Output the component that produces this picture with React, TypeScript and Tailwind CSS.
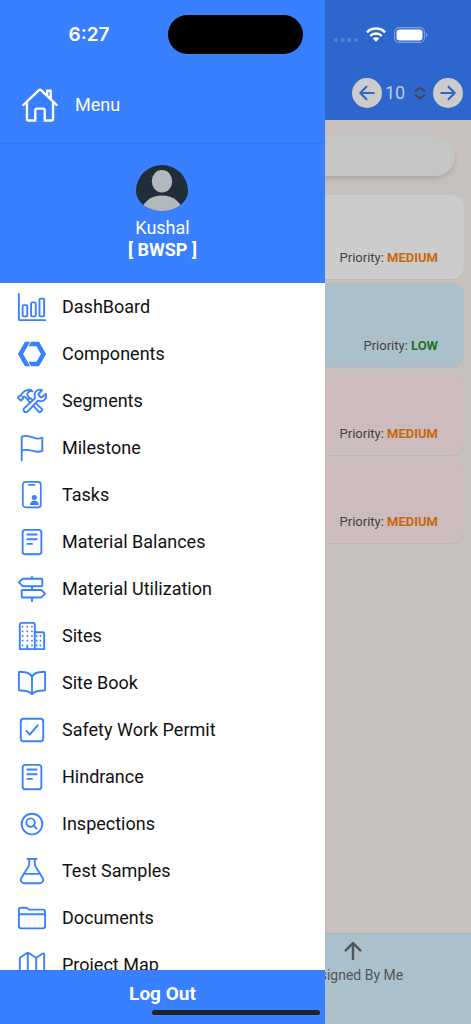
import type { ComponentType } from "react";
import {
  IoArrowBack,
  IoArrowForward,
  IoArrowUp,
  IoBarChartOutline,
  IoBookOutline,
  IoBusinessOutline,
  IoCheckboxOutline,
  IoConstructOutline,
  IoFlagOutline,
  IoFlaskOutline,
  IoFolderOutline,
  IoHomeOutline,
  IoLogoWebComponent,
  IoMapOutline,
  IoReaderOutline,
  IoSearchCircleOutline,
  IoTrailSignOutline,
} from "react-icons/io5";

interface MenuItem {
  label: string;
  icon: ComponentType<{ className?: string }>;
}

interface Task {
  priority: string;
  card: string;
  text: string;
}

function TaskIcon({ className }: { className?: string }) {
  return (
    <svg viewBox="0 0 30 30" fill="none" className={className} aria-hidden="true">
      <rect x="5.8" y="1.8" width="18" height="25.6" rx="3" stroke="currentColor" strokeWidth="1.7" />
      <path d="M11.8 4.9h5.8" stroke="currentColor" strokeWidth="1.6" strokeLinecap="round" />
      <circle cx="17.3" cy="17.6" r="2.5" fill="currentColor" />
      <path d="M13 25c0-3 2-4.2 4.3-4.2s4.5 1.2 4.5 4.2z" fill="currentColor" />
    </svg>
  );
}

const menuItems: MenuItem[] = [
  { label: "DashBoard", icon: IoBarChartOutline },
  { label: "Components", icon: IoLogoWebComponent },
  { label: "Segments", icon: IoConstructOutline },
  { label: "Milestone", icon: IoFlagOutline },
  { label: "Tasks", icon: TaskIcon },
  { label: "Material Balances", icon: IoReaderOutline },
  { label: "Material Utilization", icon: IoTrailSignOutline },
  { label: "Sites", icon: IoBusinessOutline },
  { label: "Site Book", icon: IoBookOutline },
  { label: "Safety Work Permit", icon: IoCheckboxOutline },
  { label: "Hindrance", icon: IoReaderOutline },
  { label: "Inspections", icon: IoSearchCircleOutline },
  { label: "Test Samples", icon: IoFlaskOutline },
  { label: "Documents", icon: IoFolderOutline },
  { label: "Project Map", icon: IoMapOutline },
];

const tasks: Task[] = [
  { priority: "MEDIUM", card: "bg-[#cccccc]", text: "text-[#c8690f]" },
  { priority: "LOW", card: "bg-[#abc0cb]", text: "text-[#207326]" },
  { priority: "MEDIUM", card: "bg-[#ccbcbd]", text: "text-[#c8690f]" },
  { priority: "MEDIUM", card: "bg-[#ccbcbd]", text: "text-[#c8690f]" },
];

function StatusBar() {
  return (
    <div className="pointer-events-none absolute inset-x-0 top-0 z-20 grid h-[69px] grid-cols-[1fr_135px_1fr] items-center text-white">
      <span className="pt-0.5 pl-2.5 text-center font-['Inter'] text-[19px] font-semibold">6:27</span>
      <div className="h-[39px] rounded-full bg-black" />
      <div className="flex items-center justify-center gap-2 pr-3">
        <svg viewBox="0 0 24 14" className="h-3.5 w-6" aria-hidden="true">
          <g fill="#5583d6">
            <circle cx="2" cy="12" r="2" />
            <circle cx="8.6" cy="12" r="2" />
            <circle cx="15.2" cy="12" r="2" />
            <circle cx="21.8" cy="12" r="2" />
          </g>
        </svg>
        <svg viewBox="0 0 20 15" className="h-[15px] w-5" fill="none" stroke="#fff" strokeWidth="2.5" aria-hidden="true">
          <path d="M.9 5.3a13 13 0 0 1 18.2 0" />
          <path d="M4.3 8.9a8.1 8.1 0 0 1 11.4 0" />
          <path d="M10 14.8l-3.2-3.3a4.6 4.6 0 0 1 6.4 0z" fill="#fff" stroke="none" />
        </svg>
        <svg viewBox="0 0 34 16" className="h-4 w-[34px]" aria-hidden="true">
          <rect x=".6" y=".6" width="29.8" height="14.8" rx="4.5" fill="none" stroke="#7fa2e4" strokeWidth="1.1" />
          <rect x="2.5" y="2.5" width="26" height="11" rx="3" fill="#fff" />
          <path d="M32 5.5c1.8.8 1.8 4.2 0 5z" fill="#7fa2e4" />
        </svg>
      </div>
    </div>
  );
}

function TaskPage() {
  return (
    <div className="flex min-h-screen flex-col bg-[#c6c1bf]">
      <header className="flex h-[120px] items-center justify-end bg-[#2d66cc] px-2 pt-[66px]">
        <button type="button" aria-label="Previous page" className="flex size-[30px] items-center justify-center rounded-full bg-[#cccccc] text-[#2d66cc]">
          <IoArrowBack className="size-[22px]" />
        </button>
        <div className="relative flex items-center">
          <select aria-label="Page size" defaultValue="10" className="w-[51px] appearance-none bg-transparent pl-[3px] text-lg text-[#bfcbe0]">
            <option>10</option>
          </select>
          <svg viewBox="0 0 12 14" className="pointer-events-none absolute right-[7px] h-3.5 w-3" fill="none" stroke="#46484c" strokeWidth="2" aria-hidden="true">
            <path d="M1 5.5l5-4 5 4M1 8.5l5 4 5-4" />
          </svg>
        </div>
        <button type="button" aria-label="Next page" className="flex size-[30px] items-center justify-center rounded-full bg-[#cccccc] text-[#2d66cc]">
          <IoArrowForward className="size-[22px]" />
        </button>
      </header>
      <main className="flex-1">
        <div className="px-4 pt-4">
          <input type="search" aria-label="Search" className="h-10 w-full rounded-full bg-[#c4c5c5] px-4 shadow-md" />
        </div>
        <ul className="mt-[19px] flex flex-col gap-1 px-[7px]">
          {tasks.map((task, index) => (
            <li key={index} className={`flex h-[84px] items-end justify-end rounded-xl px-[26px] pb-[11px] text-[13px] leading-5 text-[#444444] shadow-2xs ${task.card}`}>
              <p>
                Priority: <strong className={task.text}>{task.priority}</strong>
              </p>
            </li>
          ))}
        </ul>
      </main>
      <footer className="flex h-[91px] justify-end border-t border-[#a3b3bc] bg-[#abc0cb]">
        <button type="button" className="flex w-1/2 flex-col items-center pt-1 text-sm text-[#555555]">
          <IoArrowUp className="mb-px size-[26px]" />
          Assigned By Me
        </button>
      </footer>
    </div>
  );
}

function Drawer() {
  return (
    <aside className="absolute inset-y-0 left-0 z-10 flex w-[69%] flex-col bg-white">
      <div className="flex h-[144px] items-center gap-4 border-b border-[#3577ee] bg-[#3880ff] px-[21px] pt-[66px] text-lg text-white">
        <IoHomeOutline className="size-[38px]" />
        <h1>Menu</h1>
      </div>
      <div className="flex h-[139px] flex-col items-center bg-[#3880ff] pt-[21px] text-lg leading-[22px] text-white">
        <svg viewBox="0 0 52 46" className="mb-1.5 h-[46px] w-[52px]" role="img" aria-label="Profile">
          <defs>
            <clipPath id="avatar">
              <path d="M0 26a26 26 0 0 1 52 0a26 20 0 0 1-52 0z" />
            </clipPath>
          </defs>
          <g clipPath="url(#avatar)">
            <rect width="52" height="46" fill="#212d39" />
            <ellipse cx="26" cy="16.3" rx="10.2" ry="11.3" fill="#b1b8be" />
            <ellipse cx="26" cy="48" rx="21" ry="17.5" fill="#b1b8be" />
          </g>
        </svg>
        <p>Kushal</p>
        <p className="font-bold">[ BWSP ]</p>
      </div>
      <nav className="min-h-0 flex-1 overflow-hidden">
        <ul>
          {menuItems.map(({ label, icon: Icon }) => (
            <li key={label}>
              <a href="#" className="flex h-[47px] items-center gap-[15px] pl-[17px] text-lg text-[#111111]">
                <Icon className="size-[30px] text-[#3880ff]" />
                {label}
              </a>
            </li>
          ))}
        </ul>
      </nav>
      <button type="button" className="h-[54px] bg-[#3880ff] pb-1.5 text-[19px] font-bold text-white">
        Log Out
      </button>
    </aside>
  );
}

export default function App() {
  return (
    <div className="relative min-h-screen overflow-hidden font-['Roboto',sans-serif]">
      <TaskPage />
      <Drawer />
      <StatusBar />
      <div className="absolute bottom-[9px] left-1/2 z-20 h-[5px] w-[168px] -translate-x-1/2 rounded-full bg-[#222222]" />
    </div>
  );
}
